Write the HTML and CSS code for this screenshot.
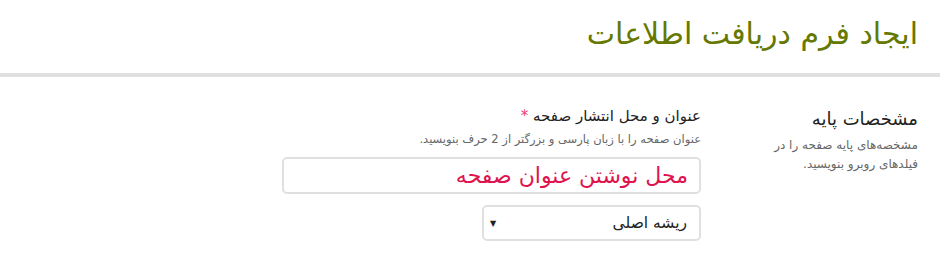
FILE: index.html
```html
<!DOCTYPE html>
<html lang="fa" dir="rtl">
<head>
<meta charset="utf-8">
<link rel="stylesheet" href="styles.css">
</head>
<body>
<header class="page-header">
  <h1 class="page-title">ایجاد فرم دریافت اطلاعات</h1>
</header>
<main class="form-section">
  <aside class="section-info">
    <h3 class="section-title">مشخصات پایه</h3>
    <p class="section-desc">مشخصه‌های پایه صفحه را در فیلدهای روبرو بنویسید.</p>
  </aside>
  <div class="section-fields">
    <label class="field-label">عنوان و محل انتشار صفحه <span class="req">*</span></label>
    <p class="field-help">عنوان صفحه را با زبان پارسی و بزرگتر از 2 حرف بنویسید.</p>
    <input class="text-input" type="text" placeholder="محل نوشتن عنوان صفحه">
    <div class="select-box">
      <span class="select-text">ریشه اصلی</span>
      <span class="select-arrow">▼</span>
    </div>
  </div>
</main>
</body>
</html>
```

FILE: styles.css
```css
html, body {
  margin: 0;
  padding: 0;
  background: #fff;
}
body {
  font-family: "DejaVu Sans", sans-serif;
  direction: rtl;
  color: #222;
}
.page-header {
  border-bottom: 4px solid #e0e0e0;
  padding-right: 22px;
  box-sizing: border-box;
  height: 77px;
}
.page-title {
  margin: 0;
  padding-top: 13px;
  font-size: 30px;
  font-weight: normal;
  color: #657800;
  line-height: 42px;
}
.form-section {
  display: flex;
  padding-right: 22px;
  gap: 37px;
}
.section-info {
  width: 180px;
  flex: none;
}
.section-title {
  margin: 31px 0 0;
  font-size: 18px;
  font-weight: normal;
  color: #222;
  line-height: 22px;
}
.section-desc {
  margin: 6px 0 0;
  font-size: 12px;
  line-height: 19px;
  color: #666;
}
.section-fields {
  width: 419px;
  display: flex;
  flex-direction: column;
  align-items: flex-start;
}
.field-label {
  margin-top: 29px;
  font-size: 15px;
  line-height: 20px;
  color: #222;
}
.req {
  color: #e8407a;
}
.field-help {
  margin: 5px 0 0;
  font-size: 11.5px;
  line-height: 16px;
  color: #666;
}
.text-input {
  margin-top: 10px;
  width: 419px;
  height: 37px;
  box-sizing: border-box;
  border: 2px solid #e0e0e0;
  border-radius: 5px;
  padding: 0 11px;
  font-family: "DejaVu Sans", sans-serif;
  font-size: 22px;
  color: #e0134f;
  direction: rtl;
  outline: none;
}
.text-input::placeholder {
  color: #e0134f;
  opacity: 1;
}
.select-box {
  margin-top: 11px;
  width: 219px;
  height: 36px;
  box-sizing: border-box;
  border: 2px solid #e0e0e0;
  border-radius: 5px;
  padding: 0 12px 0 6px;
  display: flex;
  align-items: center;
  justify-content: space-between;
  font-size: 15.5px;
  color: #222;
}
.select-arrow {
  font-size: 8px;
  color: #222;
}
```
